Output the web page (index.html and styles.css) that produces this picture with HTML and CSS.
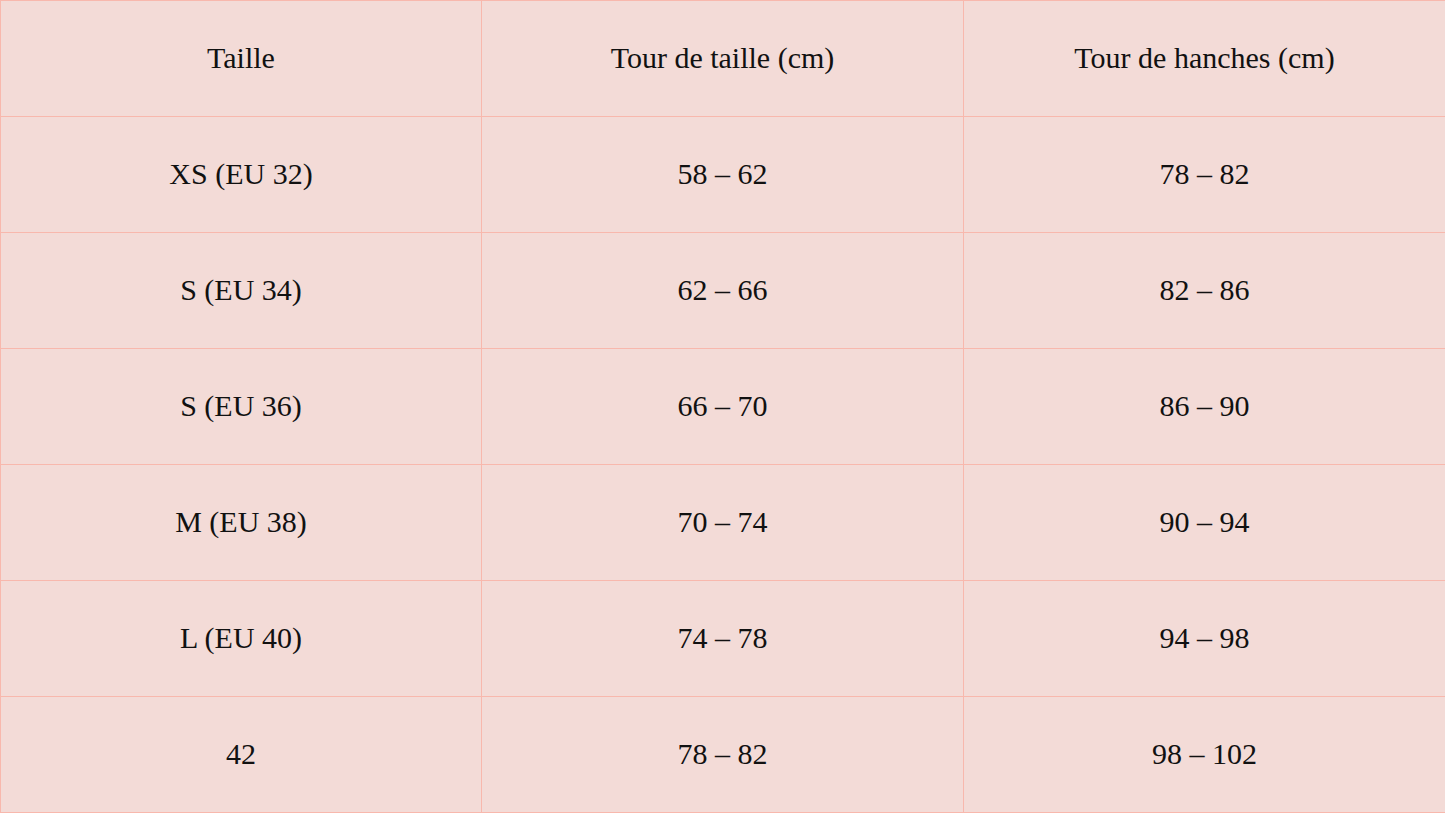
FILE: index.html
```html
<!DOCTYPE html>
<html lang="fr">
<head>
<meta charset="utf-8">
<title>Guide des tailles</title>
<link rel="stylesheet" href="styles.css">
</head>
<body>
<div class="chart">
  <div class="cell head">Taille</div>
  <div class="cell">Tour de taille (cm)</div>
  <div class="cell">Tour de hanches (cm)</div>

  <div class="cell">XS (EU 32)</div>
  <div class="cell">58 – 62</div>
  <div class="cell">78 – 82</div>

  <div class="cell">S (EU 34)</div>
  <div class="cell">62 – 66</div>
  <div class="cell">82 – 86</div>

  <div class="cell">S (EU 36)</div>
  <div class="cell">66 – 70</div>
  <div class="cell">86 – 90</div>

  <div class="cell">M (EU 38)</div>
  <div class="cell">70 – 74</div>
  <div class="cell">90 – 94</div>

  <div class="cell">L (EU 40)</div>
  <div class="cell">74 – 78</div>
  <div class="cell">94 – 98</div>

  <div class="cell">42</div>
  <div class="cell">78 – 82</div>
  <div class="cell">98 – 102</div>
</div>
</body>
</html>
```
FILE: styles.css
```css
html, body {
  margin: 0;
  padding: 0;
  background: #f3dbd7;
}
.chart {
  width: 1445px;
  height: 813px;
  box-sizing: border-box;
  display: grid;
  grid-template-columns: 481px 482px 482px;
  grid-template-rows: repeat(7, 116px) 1fr;
  border-top: 1px solid #f8b8ad;
  border-left: 1px solid #f8b8ad;
  font-family: "Liberation Serif", "DejaVu Serif", serif;
  font-size: 30px;
  color: #111;
}
.cell {
  display: flex;
  align-items: center;
  justify-content: center;
  border-right: 1px solid #f8b8ad;
  border-bottom: 1px solid #f8b8ad;
  box-sizing: border-box;
  padding-bottom: 2px;
}
```
